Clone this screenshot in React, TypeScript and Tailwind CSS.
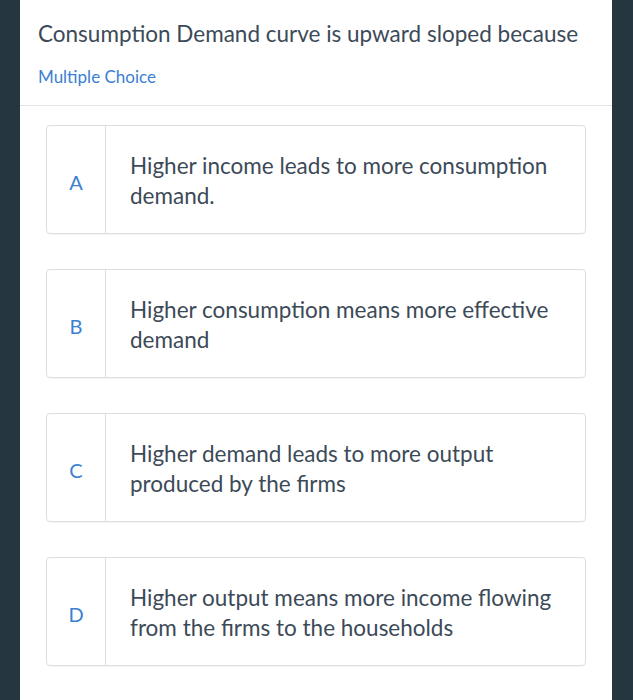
const options = [
  { letter: "A", text: "Higher income leads to more consumption demand." },
  { letter: "B", text: "Higher consumption means more effective demand" },
  { letter: "C", text: "Higher demand leads to more output produced by the firms" },
  { letter: "D", text: "Higher output means more income flowing from the firms to the households" },
]

export default function App() {
  return (
    <div
      className="flex h-[700px] w-[633px] bg-[#263640]"
      style={{ fontFamily: "Lato, 'Open Sans', sans-serif" }}
    >
      <div className="ml-[20px] flex w-[592px] flex-col bg-white">
        <div className="border-b border-[#e3e3e3] pb-[17px] pl-[18px] pt-[18px]">
          <h1 className="text-[22.5px] leading-[32px] text-[#3c4a58]">
            Consumption Demand curve is upward sloped because
          </h1>
          <div className="mt-[16px] text-[17px] leading-[22px] text-[#3a80d2]">Multiple Choice</div>
        </div>
        <div className="flex flex-col gap-[35px] pl-[26px] pr-[26px] pt-[19px]">
          {options.map((o) => (
            <div
              key={o.letter}
              className="flex h-[109px] rounded-[4px] border border-[#dedede] shadow-[0_1px_1px_rgba(0,0,0,0.04)]"
            >
              <div className="flex w-[59px] items-center justify-center border-r border-[#dedede] pt-[4px] text-[20px] text-[#3a80d2]">
                {o.letter}
              </div>
              <div className="flex flex-1 items-center pl-[24px] pr-[26px] pt-[2px] text-[22.5px] leading-[30px] text-[#3c4a58]">
                {o.text}
              </div>
            </div>
          ))}
        </div>
      </div>
    </div>
  )
}
